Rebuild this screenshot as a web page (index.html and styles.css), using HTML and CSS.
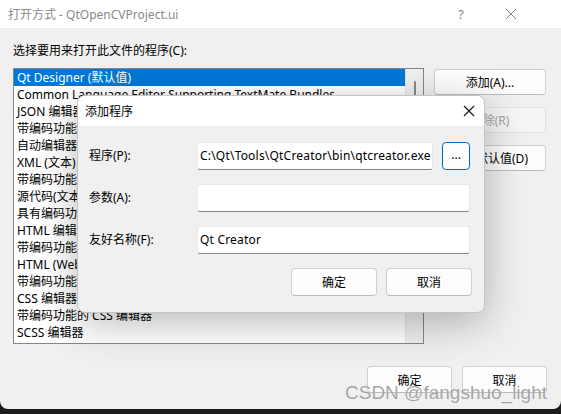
FILE: index.html
```html
<!DOCTYPE html>
<html lang="zh-CN">
<head>
<meta charset="utf-8">
<title>打开方式</title>
<link rel="stylesheet" href="styles.css">
</head>
<body>
<div class="window">
  <div class="titlebar">
    <span class="title">打开方式 - QtOpenCVProject.ui</span>
    <span class="help">?</span>
    <span class="close">
      <svg width="12" height="12" viewBox="0 0 12 12"><path d="M1 1L11 11M11 1L1 11" stroke="#8a8a8a" stroke-width="1" fill="none"/></svg>
    </span>
  </div>
  <div class="content">
    <div class="prompt">选择要用来打开此文件的程序(C):</div>
    <div class="main">
      <div class="listbox">
        <ul class="items">
          <li class="sel">Qt Designer (默认值)</li>
          <li>Common Language Editor Supporting TextMate Bundles</li>
          <li>JSON 编辑器</li>
          <li>带编码功能的 JSON 编辑器</li>
          <li>自动编辑器选择器(XML)</li>
          <li>XML (文本) 编辑器</li>
          <li>带编码功能的 XML (文本) 编辑器</li>
          <li>源代码(文本)编辑器</li>
          <li>具有编码功能的源代码(文本)编辑器</li>
          <li>HTML 编辑器</li>
          <li>带编码功能的 HTML 编辑器</li>
          <li>HTML (Web 窗体)编辑器</li>
          <li>带编码功能的 HTML (Web 窗体)编辑器</li>
          <li>CSS 编辑器</li>
          <li>带编码功能的 CSS 编辑器</li>
          <li>SCSS 编辑器</li>
        </ul>
        <div class="scroll"><div class="thumb"></div></div>
      </div>
      <div class="side">
        <button class="btn side-btn">添加(A)...</button>
        <button class="btn side-btn disabled">删除(R)</button>
        <button class="btn side-btn">设为默认值(D)</button>
      </div>
    </div>
    <div class="footer">
      <button class="btn foot-btn">确定</button>
      <button class="btn foot-btn">取消</button>
    </div>
  </div>

  <div class="dialog">
    <div class="dlg-title">
      <span>添加程序</span>
      <span class="dlg-close">
        <svg width="12" height="12" viewBox="0 0 12 12"><path d="M1 1L11 11M11 1L1 11" stroke="#1a1a1a" stroke-width="1.2" fill="none"/></svg>
      </span>
    </div>
    <div class="dlg-body">
      <div class="fields">
        <label class="flabel">程序(P):</label>
        <div class="frow">
          <div class="input short">C:\Qt\Tools\QtCreator\bin\qtcreator.exe</div>
          <button class="browse">...</button>
        </div>
        <label class="flabel">参数(A):</label>
        <div class="input"></div>
        <label class="flabel">友好名称(F):</label>
        <div class="input">Qt Creator</div>
      </div>
      <div class="dlg-footer">
        <button class="btn dlg-btn">确定</button>
        <button class="btn dlg-btn">取消</button>
      </div>
    </div>
  </div>

  <div class="watermark">CSDN @fangshuo_light</div>
</div>
</body>
</html>
```

FILE: styles.css
```css
* { box-sizing: border-box; }
html, body {
  margin: 0;
  padding: 0;
  width: 561px;
  height: 414px;
  overflow: hidden;
  background: #1c1c1c;
  font-family: "Noto Sans", "Noto Sans CJK SC", sans-serif;
  font-size: 12px;
  color: #000;
}
.window {
  position: relative;
  width: 561px;
  height: 409px;
  background: #f0f0f0;
  border-radius: 0 0 8px 8px;
  overflow: hidden;
  display: flex;
  flex-direction: column;
}
.titlebar {
  height: 28px;
  background: #fff;
  display: flex;
  align-items: center;
  padding-left: 8px;
  color: #8a8a8a;
}
.title { flex: 1; font-size: 12px; }
.help {
  width: 20px;
  text-align: center;
  font-size: 13px;
  margin-right: 34px;
}
.close {
  width: 12px;
  height: 12px;
  display: flex;
  margin-right: 44px;
}
.content {
  padding: 14px 14px 0 13px;
  display: flex;
  flex-direction: column;
}
.prompt {
  line-height: 17px;
  height: 17px;
}
.main {
  display: flex;
  margin-top: 9px;
  gap: 10px;
}
.listbox {
  width: 411px;
  height: 276px;
  background: #fff;
  border: 1px solid #828790;
  display: flex;
  overflow: hidden;
}
.items {
  list-style: none;
  margin: 0;
  padding: 0;
  flex: 1;
  overflow: hidden;
}
.items li {
  height: 17px;
  line-height: 17px;
  padding-left: 3px;
  white-space: nowrap;
  overflow: hidden;
}
.items li.sel {
  background: #0078d7;
  color: #fff;
}
.scroll {
  width: 18px;
  background: #f0f0f0;
  border-left: 1px solid #e2e2e2;
  display: flex;
  justify-content: center;
  padding-top: 12px;
}
.thumb {
  width: 2px;
  height: 16px;
  background: #8a8a8a;
  border-radius: 1px;
}
.side {
  display: flex;
  flex-direction: column;
  gap: 12px;
  padding-top: 1px;
}
.btn {
  font-family: inherit;
  font-size: 12px;
  background: #fdfdfd;
  border: 1px solid #d0d0d0;
  border-bottom-color: #bcbcbc;
  border-radius: 4px;
  color: #000;
  padding: 0;
}
.side-btn {
  width: 112px;
  height: 26px;
}
.side-btn.disabled {
  background: #f5f5f5;
  color: #a0a0a0;
  border-color: #e0e0e0;
}
.footer {
  display: flex;
  justify-content: flex-end;
  gap: 10px;
  margin-top: 22px;
}
.foot-btn {
  width: 85px;
  height: 27px;
}

.dialog {
  position: absolute;
  left: 77px;
  top: 95px;
  width: 408px;
  height: 218px;
  background: #f0f0f0;
  border: 1px solid #c4c4c4;
  border-radius: 8px;
  overflow: hidden;
  box-shadow: 0 10px 40px rgba(0, 0, 0, 0.28);
  display: flex;
  flex-direction: column;
}
.dlg-title {
  height: 30px;
  background: #fff;
  display: flex;
  align-items: center;
  padding-left: 7px;
  padding-right: 9px;
  justify-content: space-between;
}
.dlg-close { display: flex; width: 12px; height: 12px; }
.dlg-body {
  padding: 16px 12px 0 11px;
  display: flex;
  flex-direction: column;
}
.fields {
  display: grid;
  grid-template-columns: 108px 273px;
  row-gap: 14px;
  align-items: center;
}
.flabel { line-height: 28px; }
.frow {
  display: flex;
  gap: 9px;
}
.input {
  height: 28px;
  background: #fff;
  border: 1px solid #e8e8e8;
  border-bottom: 1px solid #868686;
  border-radius: 3px;
  padding: 0 2px;
  line-height: 26px;
  white-space: nowrap;
  overflow: hidden;
  letter-spacing: 0.2px;
}
.input.short { width: 238px; }
.browse {
  width: 28px;
  height: 28px;
  background: #fdfdfd;
  border: 1px solid #0067c0;
  border-radius: 4px;
  font-family: inherit;
  font-size: 12px;
  padding: 0 0 4px;
}
.dlg-footer {
  display: flex;
  justify-content: flex-end;
  gap: 9px;
  margin-top: 14px;
}
.dlg-btn {
  width: 86px;
  height: 28px;
}
.watermark {
  position: absolute;
  left: 345px;
  top: 382px;
  font-family: "Liberation Sans", sans-serif;
  font-size: 19px;
  color: rgba(125, 125, 125, 0.7);
  text-shadow: 0 0 1px rgba(255,255,255,0.8);
  white-space: nowrap;
}
```
